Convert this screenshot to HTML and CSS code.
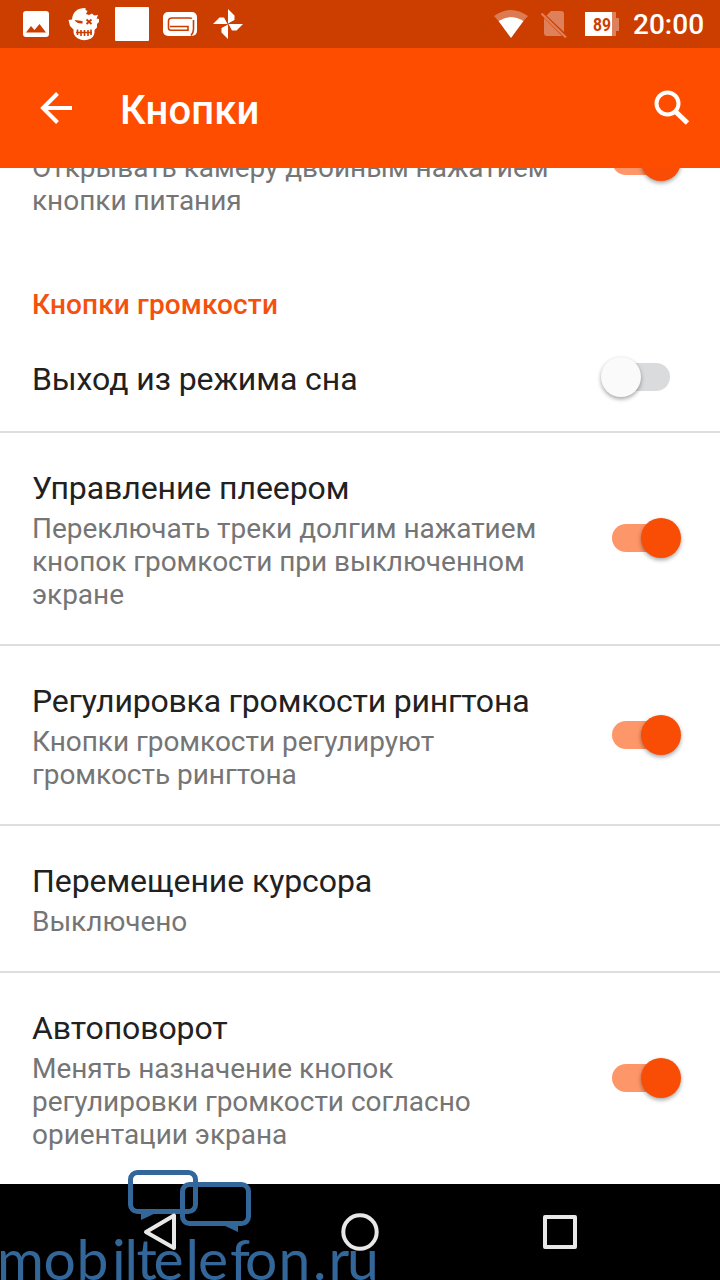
FILE: index.html
```html
<!DOCTYPE html>
<html lang="ru">
<head>
<meta charset="utf-8">
<title>Кнопки</title>
<link rel="stylesheet" href="styles.css">
</head>
<body>
<div class="screen">
  <header class="status">
    <svg class="notifications" width="260" height="48" viewBox="0 0 260 48" fill="#fff">
      <path fill-rule="evenodd" d="M26 11H46Q49 11 49 14V34Q49 37 46 37H26Q23 37 23 34V14Q23 11 26 11ZM26 32.500H46L39.500 24L34.500 30L31 26Z"/>
      <path d="M85.500 8Q73 8 72 19.500L68.500 20L70 26L73.500 29.500Q73 36 78 38.500Q84 42 91 38.500Q95 36 94.500 30L97 27.500V24L99 22V19L96.500 18.500L98 15L94 15.500L92 13.500L89 15L86 14L87.500 11L85.500 10Z"/>
      <path fill="#cc3d00" d="M74.500 20L82.500 21V23.500Q77 24 74.500 20Z"/>
      <path fill="none" stroke="#cc3d00" stroke-width="1.800" d="M86.500 19.500L91.500 24M91.500 19.500L86.500 24"/>
      <path fill="none" stroke="#cc3d00" stroke-width="1.600" d="M76 32.500H92M77.500 29.500V35M81 30V36M84.500 30V36M88 30V36M91 29.500V35"/>
      <rect x="115" y="7" width="34" height="34" rx="1"/>
      <rect x="163" y="12" width="34" height="24" rx="5"/>
      <path fill="none" stroke="#cc3d00" stroke-width="1.600" d="M192 18.500Q191.500 18 189 18H172Q168.500 18 168.500 21V28Q168.500 30.200 171 30.200H188V26.500H170M193.500 20V29Q193.500 33 191 35.500"/>
      <path d="M228 9L234.500 15.500V20L228 23.500ZM243 24L236.500 30.500H232L228.500 24ZM228 39L221.500 32.500V28L228 24.500ZM213 24L219.500 17.500H224L227.500 24Z"/>
    </svg>
    <div class="indicators">
      <svg width="134" height="48" viewBox="490 0 134 48" fill="#fff">
        <path fill-opacity=".32" d="M494 16Q511 4 528 16L523.500 21Q511 13 498.500 21Z"/>
        <path d="M498.500 21Q511 13 523.500 21L511 38Z"/>
        <path fill-opacity=".35" d="M551 11H561Q564 11 564 14V32L546.500 15.500ZM544 18L562 36H547Q544 36 544 33Z"/>
        <path stroke="#fff" stroke-opacity=".35" stroke-width="2.400" d="M541.500 13.500L566 37.500"/>
        <path fill-opacity=".35" d="M612 12H616V18H619V31H616V36H612Z"/>
        <path d="M585 12H612V36H585Z"/>
        <text class="battery" x="593" y="30.500" textLength="18" lengthAdjust="spacingAndGlyphs">89</text>
      </svg>
      <span class="clock">20:00</span>
    </div>
  </header>
  <div class="toolbar">
    <svg width="32" height="32" viewBox="0 0 32 32" fill="none" stroke="#fff" stroke-width="4"><path d="M32 16H3M17.500 1.500L3 16L17.500 30.500"/></svg>
    <h1>Кнопки</h1>
    <svg class="search" width="36" height="36" viewBox="0 0 36 36" fill="none" stroke="#fff"><circle cx="13.500" cy="13.500" r="11" stroke-width="4"/><path stroke-width="5" d="M22 22L33.500 33"/></svg>
  </div>
  <main class="list">
    <section class="row row-clipped">
      <div class="copy"><p>Открывать камеру двойным нажатием<br>кнопки питания</p></div>
      <span class="switch on"></span>
    </section>
    <h2>Кнопки громкости</h2>
    <section class="row row-single">
      <div class="copy"><h3>Выход из режима сна</h3></div>
      <span class="switch"></span>
    </section>
    <section class="row">
      <div class="copy"><h3>Управление плеером</h3><p>Переключать треки долгим нажатием<br>кнопок громкости при выключенном<br>экране</p></div>
      <span class="switch on"></span>
    </section>
    <section class="row">
      <div class="copy"><h3 class="tight">Регулировка громкости рингтона</h3><p>Кнопки громкости регулируют<br>громкость рингтона</p></div>
      <span class="switch on"></span>
    </section>
    <section class="row">
      <div class="copy"><h3>Перемещение курсора</h3><p>Выключено</p></div>
    </section>
    <section class="row">
      <div class="copy"><h3>Автоповорот</h3><p>Менять назначение кнопок<br>регулировки громкости согласно<br>ориентации экрана</p></div>
      <span class="switch on"></span>
    </section>
  </main>
  <nav class="navbar">
    <svg width="720" height="96" viewBox="0 1184 720 96" fill="none" stroke="#e8e8e8" stroke-width="4" stroke-linejoin="round">
      <circle cx="360" cy="1232" r="16.700"/>
      <rect x="545" y="1217" width="30" height="30"/>
    </svg>
  </nav>
  <svg class="watermark" width="400" height="120" viewBox="0 1160 400 120">
    <g fill="none" stroke="#336699" stroke-width="5">
      <rect x="130.500" y="1172.500" width="65" height="39" rx="7"/>
      <rect x="182.500" y="1184.500" width="66" height="39" rx="7"/>
    </g>
    <path fill="#336699" d="M141 1212H158L141 1220ZM221 1224H238V1232Z"/>
    <text class="brand" y="1280" x="-3 43.500 76.500 112 124.500 136.500 153.500 185.500 198 230 245 278.500 313 328.500 347">mobiltelefon.ru</text>
    <path d="M174 1215.500V1248L146 1232Z" fill="none" stroke="#e8e8e8" stroke-width="4" stroke-linejoin="round"/>
  </svg>
</div>
</body>
</html>
```
FILE: styles.css
```css
* { box-sizing: border-box; }
body, h1, h2, h3, p { margin: 0; }
body { font-family: Roboto, "Noto Sans", sans-serif; background: #fff; }
.screen { position: relative; width: 720px; height: 1280px; display: flex; flex-direction: column; overflow: hidden; }
svg { display: block; flex: none; }

.status { height: 48px; flex: none; display: flex; justify-content: space-between; background: #cc3d00; color: #fff; }
.indicators { display: flex; align-items: center; padding-right: 16px; gap: 9px; }
.clock { font-size: 28px; font-weight: 500; line-height: 48px; padding-top: 2px; width: 71px; white-space: nowrap; }
.battery { font: 700 19px Roboto, sans-serif; fill: #cc3d00; }

.toolbar { height: 120px; flex: none; display: flex; align-items: center; padding: 0 30px 0 40px; background: #ff4d00; color: #fff; }
h1 { font-size: 40px; font-weight: 500; line-height: 48px; padding: 5px 0 0 48px; letter-spacing: .1px; }
.search { margin-left: auto; }

.list { height: 1016px; flex: none; overflow: hidden; display: flex; flex-direction: column; }
.row { flex: none; display: flex; align-items: center; justify-content: space-between; padding: 34px 50px 33px 32px; border-bottom: 2px solid #dedede; }
.row:last-child { border-bottom-color: transparent; }
.row-clipped { margin-top: -96px; border-color: transparent; }
.row-clipped .copy { padding-top: 45px; }
.row-single { height: 111px; padding: 0 50px 0 32px; }
.row-single .copy { padding-top: 7px; }
h2 { height: 34px; margin-top: 36px; padding-left: 32px; flex: none; color: #f4510f; font-size: 28px; font-weight: 500; line-height: 33px; letter-spacing: .13px; }
h3 { margin-bottom: 3px; color: #212121; font-size: 32px; font-weight: 400; line-height: 42px; letter-spacing: -.08px; white-space: nowrap; }
h3.tight { letter-spacing: -.2px; }
p { color: #757575; font-size: 28px; line-height: 33px; letter-spacing: -.03px; white-space: nowrap; }

.switch { position: relative; flex: none; width: 58px; height: 28px; border-radius: 14px; background: #dadbdd; }
.switch::after { content: ""; position: absolute; top: -6px; left: -11px; width: 40px; height: 40px; border-radius: 50%; background: #fafafa; box-shadow: 0 2px 4px rgba(0, 0, 0, .36); }
.switch.on { margin-bottom: 2px; background: #fd9669; }
.switch.on::after { left: 29px; background: #f94c04; }

.navbar { height: 96px; flex: none; background: #000; }
.watermark { position: absolute; left: 0; bottom: 0; }
.brand { font: 400 57px Lato, sans-serif; fill: #336699; }
```
